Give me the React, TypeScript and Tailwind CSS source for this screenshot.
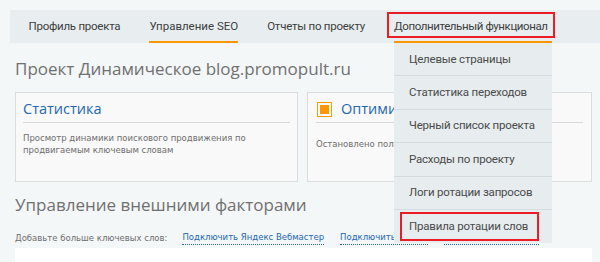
import React from "react";

const navItems = ["Профиль проекта", "Управление SEO", "Отчеты по проекту", "Дополнительный функционал"];
const navTracking = ["tracking-[-0.25px]", "tracking-[0px]", "tracking-[-0.25px]", "tracking-[-0.4px]"];
const menu = [
  "Целевые страницы",
  "Статистика переходов",
  "Черный список проекта",
  "Расходы по проекту",
  "Логи ротации запросов",
  "Правила ротации слов",
];

export default function App() {
  return (
    <div className="relative w-[600px] h-[262px] overflow-hidden bg-[#f4f7f8] pt-[10px] pl-[10px]" style={{ fontFamily: "Roboto, 'Liberation Sans', Arial, sans-serif" }}>
      {/* nav */}
      <div className="flex h-[33px] bg-[#e8eef0] pl-[4px]">
        {navItems.map((t, i) => (
          <div
            key={t}
            className={`relative flex items-center px-[14.5px] text-[11.5px] text-[#3d3d3d] ${navTracking[i]}`}
          >
            {t}
            {i === 1 && <div className="absolute left-[14.5px] right-[14.5px] bottom-0 h-[2px] bg-[#ff9800]" />}
          </div>
        ))}
      </div>

      <div className="pl-[5px] pr-[8px]">
        <div className="mt-[13px] h-[26px] text-[17px] leading-[26px] text-[#707070]" style={{ fontFamily: "'Open Sans', sans-serif" }}>
          Проект Динамическое blog.promopult.ru
        </div>

        <div className="mt-[10px] flex gap-[9px]">
          <div className="h-[90px] w-[284px] border border-[#dcdcdc] bg-[#f9f9f9] px-[7px]">
            <div className="mt-[5px] h-[22px] text-[14.5px] leading-[22px] text-[#2267b0]" style={{ fontFamily: "'Open Sans', sans-serif" }}>
              Статистика
            </div>
            <div className="mt-[2px] h-px bg-[#d8d8d8]" />
            <div className="mt-[9px] text-[8.5px] leading-[12px] text-[#6e6e6e]" style={{ fontFamily: "'DejaVu Sans', Verdana, sans-serif" }}>
              Просмотр динамики поискового продвижения по
              <br />
              продвигаемым ключевым словам
            </div>
          </div>
          <div className="h-[90px] w-[286px] border border-[#dcdcdc] bg-[#f9f9f9] px-[8px]">
            <div className="mt-[5px] flex h-[22px] items-center gap-[9px] pl-[1px]">
              <div className="flex h-[15px] w-[15px] items-center justify-center border border-[#ff9800] bg-white">
                <div className="h-[9px] w-[9px] bg-[#ff9800]" />
              </div>
              <span className="text-[14.5px] leading-[22px] text-[#2267b0]" style={{ fontFamily: "'Open Sans', sans-serif" }}>
                Оптимизация
              </span>
            </div>
            <div className="mt-[2px] h-px bg-[#d8d8d8]" />
            <div className="mt-[15px] text-[8.5px] leading-[12px] text-[#6e6e6e]" style={{ fontFamily: "'DejaVu Sans', Verdana, sans-serif" }}>
              Остановлено полностью
            </div>
          </div>
        </div>

        <div className="mt-[10px] h-[25px] text-[17px] leading-[25px] text-[#707070]" style={{ fontFamily: "'Open Sans', sans-serif" }}>
          Управление внешними факторами
        </div>

        <div className="mt-[14px] flex h-[14px] items-center whitespace-nowrap text-[8.5px] text-[#6e6e6e]" style={{ fontFamily: "'DejaVu Sans', Verdana, sans-serif" }}>
          <span>Добавьте больше ключевых слов:</span>
          <span className="ml-[15px] border-b border-dotted border-[#2267b0] text-[#2267b0]">Подключить Яндекс Вебмастер</span>
          <span className="ml-[16px] border-b border-dotted border-[#2267b0] text-[#2267b0]">Подключить Google</span>
          <span className="ml-[16px] border-b border-dotted border-[#2267b0] text-[#2267b0]">Добавить свои слова</span>
        </div>

        <div className="mt-[3px] h-[20px] bg-white" />
      </div>

      {/* dropdown */}
      <div className="absolute left-[394px] top-[41px] w-[158px] border-t-2 border-[#ff9800] bg-[#e7edef]">
        {menu.map((m, i) => (
          <div
            key={m}
            className={`flex h-[33.4px] items-center pl-[15px] text-[11.5px] tracking-[-0.2px] text-[#4a4a4a] ${i < menu.length - 1 ? "border-b border-[#d5dcdf]" : ""}`}
          >
            {m}
          </div>
        ))}
      </div>

      {/* red annotation boxes */}
      <div className="absolute left-[387px] top-[12px] h-[26px] w-[168px] border-2 border-[#ec1c24]" />
      <div className="absolute left-[400px] top-[212px] h-[29px] w-[139px] border-2 border-[#ec1c24]" />
    </div>
  );
}
